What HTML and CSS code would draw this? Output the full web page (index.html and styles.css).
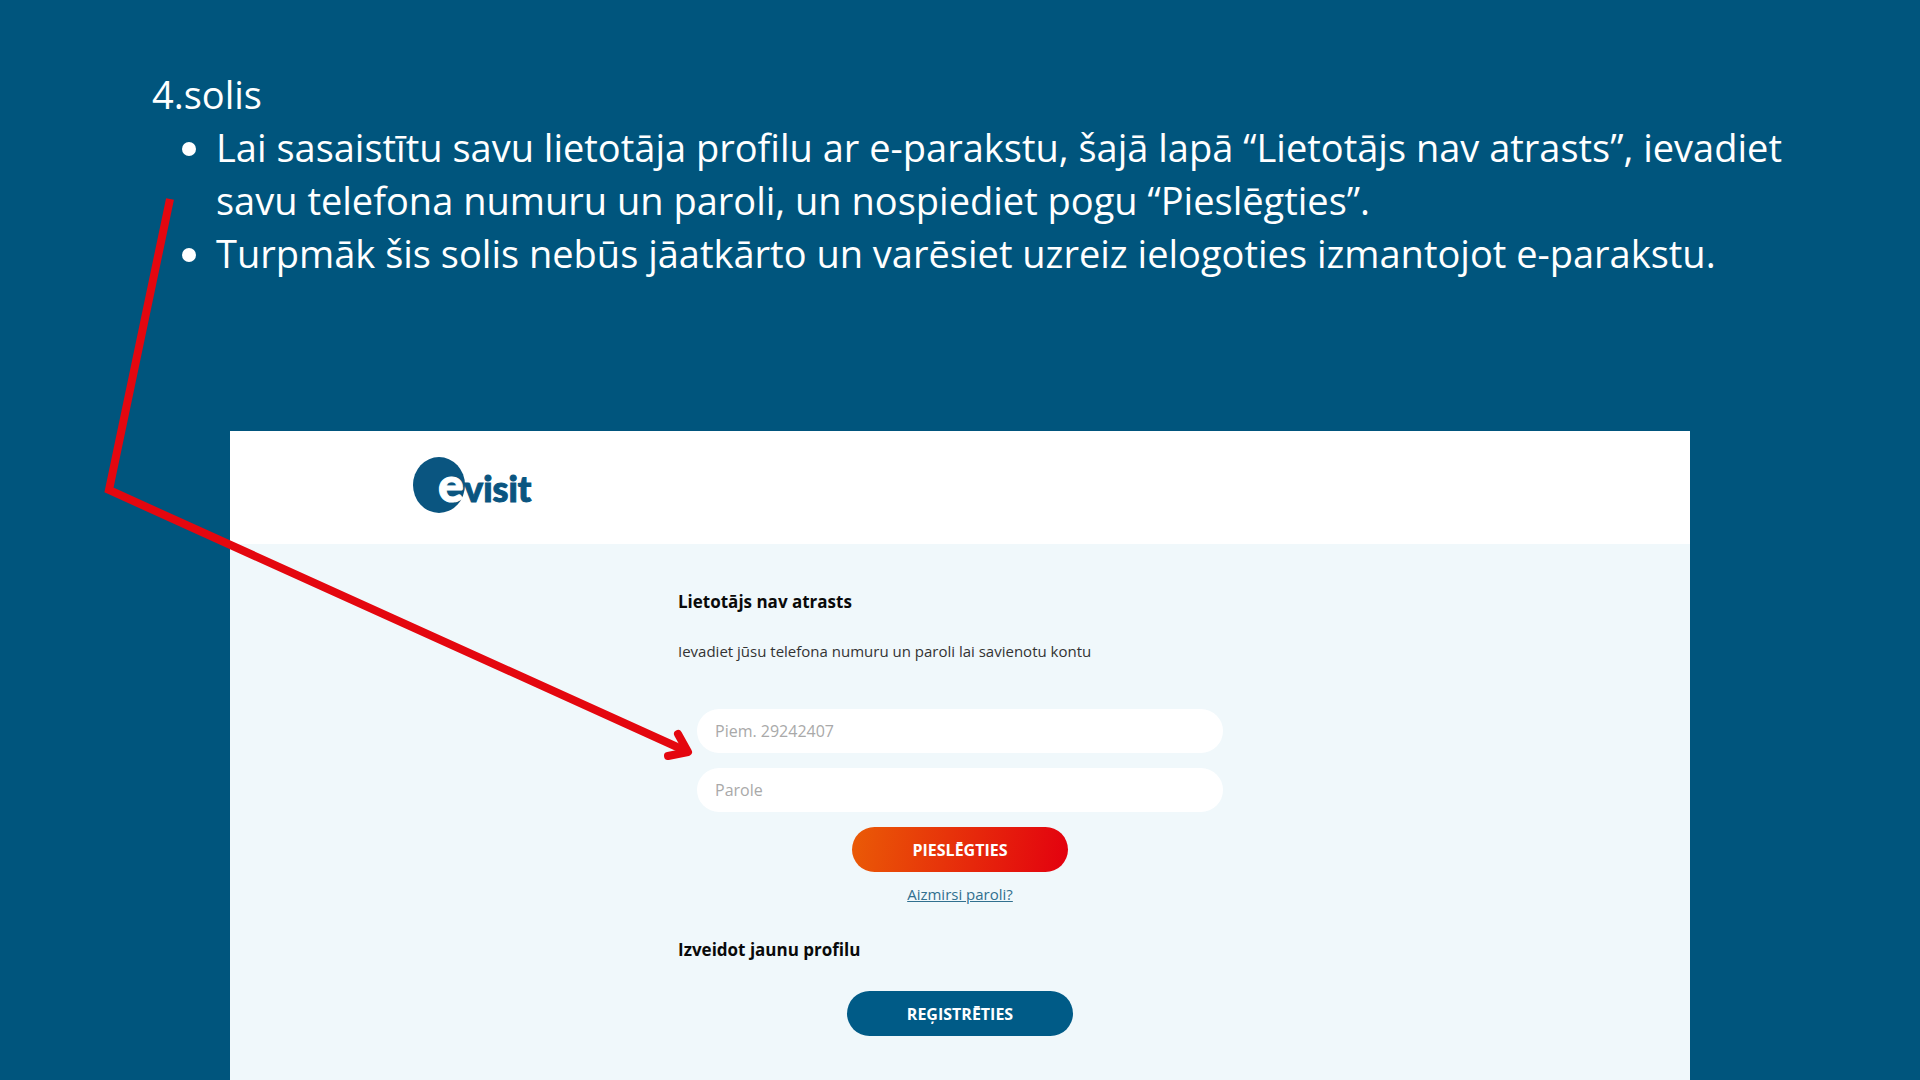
FILE: index.html
```html
<!DOCTYPE html>
<html lang="lv">

<head>
	<meta charset="UTF-8">
	<meta name="viewport" content="width=device-width, initial-scale=1.0">
	<title>4.solis</title>
	<link rel="stylesheet" href="styles.css">
</head>

<body>
	<section class="instructions">
		<p>4.solis</p>
		<ul>
			<li>Lai sasaistītu savu lietotāja profilu ar e-parakstu, šajā lapā “Lietotājs nav atrasts”, ievadiet savu telefona numuru un paroli, un nospiediet pogu “Pieslēgties”.</li>
			<li>Turpmāk šis solis nebūs jāatkārto un varēsiet uzreiz ielogoties izmantojot e-parakstu.</li>
		</ul>
	</section>

	<main class="panel">
		<header>
			<svg class="logo" width="124" height="60" viewBox="0 0 124 60" role="img" aria-label="evisit">
				<ellipse cx="27" cy="30" rx="26" ry="28" />
				<text class="logo-e" x="26" y="47">e</text>
				<text class="logo-name" x="52" y="47">visit</text>
			</svg>
		</header>

		<div class="content">
			<h1>Lietotājs nav atrasts</h1>
			<p class="intro">Ievadiet jūsu telefona numuru un paroli lai savienotu kontu</p>

			<form>
				<input type="tel" name="phone" aria-label="Telefona numurs" placeholder="Piem. 29242407">
				<input type="password" name="password" aria-label="Parole" placeholder="Parole">
				<button type="button" class="btn btn-login">PIESLĒGTIES</button>
				<a href="#">Aizmirsi paroli?</a>
			</form>

			<h2>Izveidot jaunu profilu</h2>
			<button type="button" class="btn btn-register">REĢISTRĒTIES</button>
		</div>
	</main>

	<!-- Arrow from the instructions to the phone field -->
	<svg class="arrow" viewBox="0 0 1920 1080" aria-hidden="true">
		<polyline points="170,199 109,490 686,751" />
		<polyline class="arrow-head" points="678,734 688,752 668,756" />
	</svg>
</body>

</html>
```

FILE: styles.css
```css
* {
	box-sizing: border-box;
}

body {
	font-family: "Open Sans", sans-serif;
	margin: 0;
	min-height: 100vh;
	display: flex;
	flex-direction: column;
	position: relative;
	overflow-x: hidden;
	background-color: #00557d;
}

.instructions {
	padding: 68px 136px 0 152px;
	min-height: 431px;
	color: white;
	font-size: 38px;
	line-height: 53px;
}

.instructions p,
.instructions ul {
	margin: 0;
}

.instructions ul {
	padding-left: 64px;
}

.panel {
	width: 76%;
	margin: 0 auto;
	flex: 1;
	background-color: #f0f8fb;
}

header {
	background-color: white;
	padding: 24px 182px 29px;
}

.logo {
	display: block;
	overflow: visible;
	fill: #0a5580;
	font-family: Lato, sans-serif;
	font-weight: 900;
}

.logo-e {
	fill: white;
	stroke: white;
	stroke-width: 1px;
	font-size: 48px;
}

.logo-name {
	stroke: #0a5580;
	stroke-width: 1px;
	font-size: 36px;
}

.content {
	max-width: 564px;
	margin: 0 auto;
	padding: 45px 0;
	display: flex;
	flex-direction: column;
}

h1,
h2 {
	margin: 0;
	color: #0a0a0a;
	font-size: 17px;
	line-height: 26px;
}

.intro {
	margin: 24px 0 46px;
	color: #333;
	font-size: 15px;
	line-height: 24px;
}

form {
	padding: 0 19px;
	display: flex;
	flex-direction: column;
	align-items: center;
	gap: 15px;
}

input {
	width: 100%;
	height: 44px;
	padding: 0 18px;
	border: none;
	border-radius: 22px;
	background-color: white;
	font-family: inherit;
	font-size: 16px;
}

input::placeholder {
	color: #a9a9a9;
}

form a {
	color: #31708f;
	font-size: 15px;
	line-height: 14px;
}

h2 {
	margin: 36px 0 28px;
}

.btn {
	height: 45px;
	padding: 0 60px;
	border: none;
	border-radius: 23px;
	color: white;
	font-family: inherit;
	font-size: 16px;
	font-weight: bold;
	cursor: pointer;
}

.btn-login {
	background: linear-gradient(100deg, #ea5b06, #e3000f);
}

.btn-register {
	align-self: center;
	background-color: #005b87;
}

.arrow {
	position: absolute;
	top: 0;
	left: 0;
	width: 100%;
	pointer-events: none;
	fill: none;
	stroke: #e4070f;
	stroke-width: 8px;
}

.arrow-head {
	stroke-linecap: round;
	stroke-linejoin: round;
}
```
